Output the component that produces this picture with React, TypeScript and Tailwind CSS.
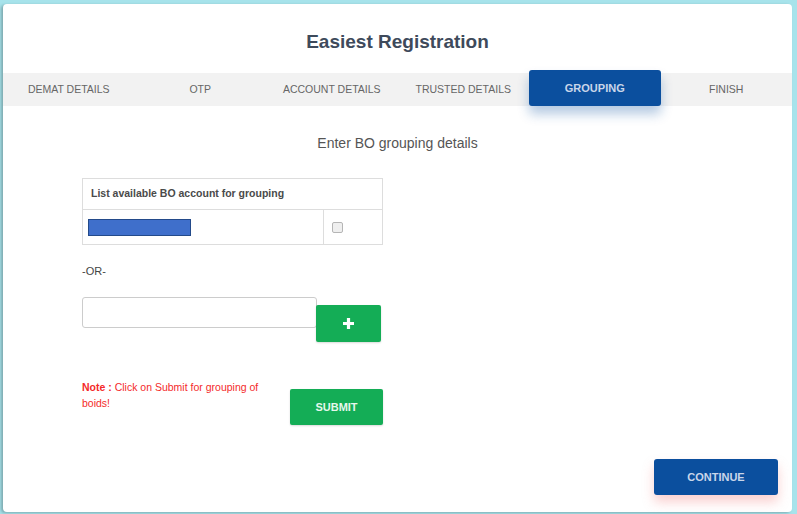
import React from "react";

const tabs = ["DEMAT DETAILS", "OTP", "ACCOUNT DETAILS", "TRUSTED DETAILS", "GROUPING", "FINISH"];

export default function App() {
  return (
    <div
      className="w-[797px] h-[514px] bg-[#a7e3eb] pt-[4px] pl-[3px] overflow-hidden"
      style={{ fontFamily: '"Liberation Sans", Arial, sans-serif' }}
    >
      <div className="w-[789px] h-[508px] bg-white rounded-[4px] shadow-[-2px_1px_3px_rgba(0,0,0,0.25)] relative">
        <div className="pt-[26px] pb-[19px] text-center text-[19px] leading-[24px] font-bold text-[#3e4a5b]">
          Easiest Registration
        </div>
        <div className="grid grid-cols-6 h-[33px] bg-[#f2f2f2]">
          {tabs.map((t) =>
            t === "GROUPING" ? (
              <div key={t} className="relative">
                <div className="absolute left-0 right-0 top-[-3px] h-[36px] rounded-[3px] bg-[#0b4f9e] shadow-[0_8px_12px_rgba(11,79,158,0.3)] flex items-center justify-center text-[11px] font-bold text-[#c9d6ea]">
                  {t}
                </div>
              </div>
            ) : (
              <div key={t} className="flex items-center justify-center text-[10.5px] text-[#666]">
                {t}
              </div>
            )
          )}
        </div>
        <div className="mt-[29px] text-center text-[14px] leading-[16px] text-[#555]">Enter BO grouping details</div>
        <div className="pl-[79px] mt-[27px]">
          <div className="w-[301px] border border-[#ddd]">
            <div className="h-[31px] flex items-center px-[8px] text-[10.5px] font-bold text-[#4a4a4a] border-b border-[#ddd]">
              List available BO account for grouping
            </div>
            <div className="flex h-[34px]">
              <div className="w-[241px] border-r border-[#ddd] flex items-center pl-[5px]">
                <div className="w-[103px] h-[17px] bg-[#3f6fcb] border border-[#234a8a]" />
              </div>
              <div className="flex-1 flex items-center pl-[8px]">
                <div className="w-[11px] h-[11px] rounded-[2px] border border-[#b5b5b5] bg-[#efefef]" />
              </div>
            </div>
          </div>
          <div className="mt-[19px] text-[11px] leading-[14px] text-[#444]">-OR-</div>
          <div className="mt-[19px] flex items-start">
            <div className="w-[235px] h-[31px] border border-[#ccc] rounded-[3px] bg-white" />
            <div className="mt-[8px] -ml-[1px] w-[65px] h-[37px] rounded-[2px] bg-[#14ad56] shadow-[0_1px_2px_rgba(0,0,0,0.15)] flex items-center justify-center">
              <svg width="13" height="13" viewBox="0 0 13 13">
                <path d="M6.5 1v11M1 6.5h11" stroke="#fff" strokeWidth="3.2" strokeLinecap="butt" />
              </svg>
            </div>
          </div>
          <div className="mt-[37px] flex items-start">
            <div className="w-[185px] text-[10.5px] leading-[16px] text-[#f42a2a]">
              <span className="font-bold">Note : </span>Click on Submit for grouping of boids!
            </div>
            <div className="ml-[23px] mt-[10px] w-[93px] h-[36px] rounded-[2px] bg-[#14ad56] shadow-[0_1px_2px_rgba(0,0,0,0.15)] flex items-center justify-center text-[11px] font-bold text-[#e6f7ec]">
              SUBMIT
            </div>
          </div>
        </div>
        <div className="absolute left-[651px] top-[455px] w-[124px] h-[36px] rounded-[3px] bg-[#0b4f9e] shadow-[0_7px_12px_rgba(240,120,120,0.35)] flex items-center justify-center text-[11px] font-bold text-[#c9d6ea]">
          CONTINUE
        </div>
      </div>
    </div>
  );
}
